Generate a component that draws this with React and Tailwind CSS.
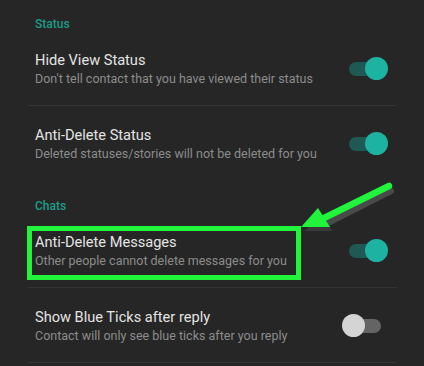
import React from "react";

function Toggle({ on }) {
  return (
    <div className="relative w-[46px] h-[23px] shrink-0">
      <div
        className={`absolute left-[7px] right-[7px] top-[4.5px] h-[14px] rounded-full ${
          on ? "bg-[#1e5a53]" : "bg-[#646464]"
        }`}
      />
      <div
        className={`absolute top-0 w-[23px] h-[23px] rounded-full ${
          on ? "right-0 bg-[#1db3a2]" : "left-0 bg-[#d4d4d4]"
        }`}
      />
    </div>
  );
}

function Row({ title, sub, on, divider, highlight }) {
  return (
    <div className={`relative ${divider ? "border-b border-[#343434]" : ""}`}>
      <div className="flex items-center justify-between pl-[7px] pr-[9px] pt-[19px] pb-[18px]">
        <div className="flex flex-col">
          <span className="text-[14.6px] leading-[20px] text-[#e4e4e4]">{title}</span>
          <span className="text-[12.5px] leading-[17px] text-[#8c8c8c]">{sub}</span>
        </div>
        <Toggle on={on} />
      </div>
      {highlight && (
        <div className="absolute left-[-1px] top-[13px] w-[274px] h-[54px] border-[5px] border-[#20f53c]" />
      )}
    </div>
  );
}

export default function App() {
  return (
    <div
      className="relative w-[424px] h-[366px] overflow-hidden bg-[#262626]"
      style={{ fontFamily: "Roboto, 'Noto Sans', sans-serif" }}
    >
      <div className="px-[28px] pr-[27px]">
        {/* Status */}
        <div className="pt-[17px] pl-[7px] text-[12px] leading-[14px] font-medium text-[#1e9c8a]">
          Status
        </div>
        <Row
          title="Hide View Status"
          sub="Don't tell contact that you have viewed their status"
          on
          divider
        />
        <Row
          title="Anti-Delete Status"
          sub="Deleted statuses/stories will not be deleted for you"
          on
        />

        {/* Chats */}
        <div className="pt-[19px] pl-[7px] text-[12px] leading-[14px] font-medium text-[#1e9c8a]">
          Chats
        </div>
        <Row
          title="Anti-Delete Messages"
          sub="Other people cannot delete messages for you"
          on
          divider
          highlight
        />
        <Row
          title="Show Blue Ticks after reply"
          sub="Contact will only see blue ticks after you reply"
          divider
        />
      </div>

      {/* annotation arrow */}
      <svg className="absolute left-0 top-0" width="424" height="366" viewBox="0 0 424 366">
        <line x1="391" y1="191" x2="328" y2="223" stroke="#4a4a4a" strokeWidth="6" strokeLinecap="round" />
        <polygon points="305,231 322,214 332,231" fill="#3a3a3a" />
        <line x1="389" y1="186" x2="320" y2="220" stroke="#20f53c" strokeWidth="6.5" strokeLinecap="round" />
        <polygon points="301,227 318,208 330,227" fill="#20f53c" />
      </svg>
    </div>
  );
}
